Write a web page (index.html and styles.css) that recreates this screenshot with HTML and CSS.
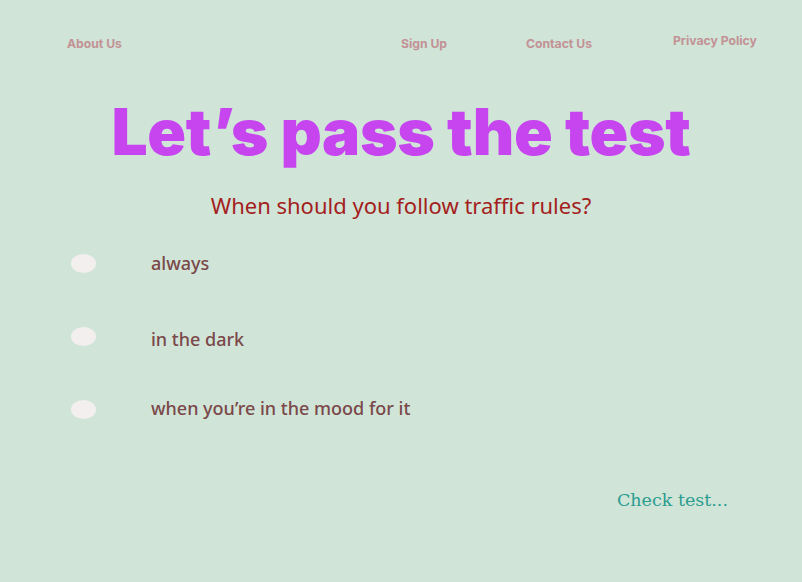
FILE: index.html
```html
<!DOCTYPE html>
<html lang="en">
<head>
<meta charset="utf-8">
<title>Let's pass the test</title>
<link rel="stylesheet" href="styles.css">
</head>
<body>
<nav class="nav">
  <a class="nav-link about" href="#">About Us</a>
  <a class="nav-link signup" href="#">Sign Up</a>
  <a class="nav-link contact" href="#">Contact Us</a>
  <a class="nav-link privacy" href="#">Privacy Policy</a>
</nav>
<main class="main">
  <h1 class="title">Let’s pass the test</h1>
  <p class="question">When should you follow traffic rules?</p>
  <ul class="options">
    <li class="option"><span class="radio"></span><span class="label">always</span></li>
    <li class="option opt2"><span class="radio"></span><span class="label">in the dark</span></li>
    <li class="option opt3"><span class="radio"></span><span class="label">when you’re in the mood for it</span></li>
  </ul>
  <div class="actions"><a class="check" href="#">Check test...</a></div>
</main>
</body>
</html>
```
FILE: styles.css
```css
html, body {
  margin: 0;
  padding: 0;
}
body {
  background: #d0e4d8;
  width: 802px;
  height: 582px;
  overflow: hidden;
  font-family: Inter, "Liberation Sans", sans-serif;
}
.nav {
  display: flex;
  align-items: flex-start;
  padding: 36px 0 0 67px;
  height: 22px;
}
.nav-link {
  font-family: Inter, sans-serif;
  font-weight: 700;
  font-size: 12.2px;
  line-height: 15px;
  color: #c29295;
  text-decoration: none;
}
.signup { margin-left: 279px; }
.contact { margin-left: 79px; }
.privacy { margin-left: 81px; margin-top: -3px; }

.main {
  display: flex;
  flex-direction: column;
}
.title {
  margin: 42px 0 0;
  text-align: center;
  font-family: Inter, sans-serif;
  font-weight: 900;
  font-size: 64px;
  line-height: 64px;
  letter-spacing: -0.3px;
  color: #c645ef;
}
.question {
  margin: 27px 0 0;
  text-align: center;
  font-family: "Noto Sans", sans-serif;
  font-size: 22px;
  line-height: 28px;
  color: #a41e20;
}
.options {
  list-style: none;
  margin: 32px 0 0;
  padding: 0 0 0 71px;
}
.option {
  display: flex;
  align-items: center;
  height: 24px;
}
.opt2 { margin-top: 49px; }
.opt3 { margin-top: 49px; }
.radio {
  width: 25px;
  height: 19px;
  border-radius: 50%;
  background: #f2efee;
}
.label {
  margin-left: 55px;
  font-family: "Noto Sans", sans-serif;
  font-weight: 500;
  font-size: 18px;
  color: #7a4849;
}
.opt2 .label { margin-top: 6px; }
.opt3 .label { margin-top: -2px; }
.actions {
  display: flex;
  justify-content: flex-end;
  padding: 69px 74px 0 0;
}
.check {
  font-family: "DejaVu Serif", serif;
  font-size: 17.5px;
  color: #2a9d8f;
  text-decoration: none;
}
```
